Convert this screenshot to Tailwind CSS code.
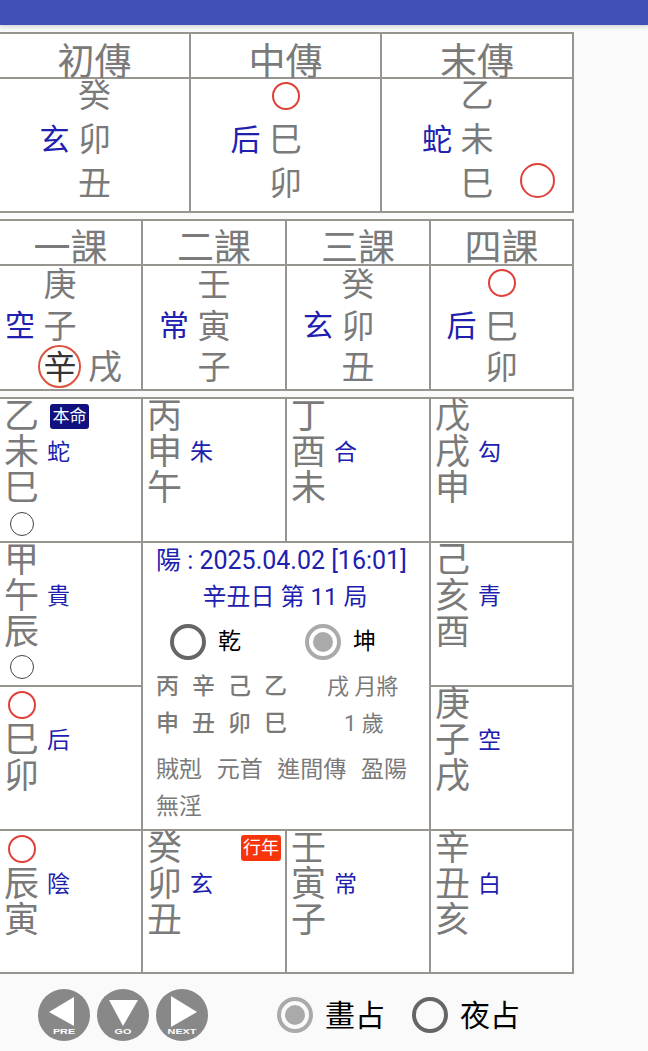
<!DOCTYPE html>
<html lang="en">
<head>
  <meta charset="UTF-8" />
  <meta name="viewport" content="width=device-width, initial-scale=1.0"/>
  <title>六壬</title>
  <script src="https://cdn.jsdelivr.net/npm/@tailwindcss/browser@4"></script>
</head>
<body class="bg-[#fafafa] font-['Roboto','Noto_Sans_CJK_TC',sans-serif] text-[#7a7a7a]">
<div class="w-[648px] h-[1051px] overflow-hidden flex flex-col">
  <!-- App bar -->
  <div class="h-[25px] bg-[#3f51b5] shadow-[0_2px_4px_rgba(0,0,0,0.15)] shrink-0"></div>

  <!-- Three transmissions -->
  <div class="mt-[7px] w-[574px] grid grid-cols-[189px_189px_190px] grid-rows-[43px_132px] gap-[2px] p-[2px] pl-0 bg-[#989490]">
    <div class="bg-white text-center text-[37px] leading-[43px] pt-[7px] h-[43px] relative z-10">初傳</div>
    <div class="bg-white text-center text-[37px] leading-[43px] pt-[7px] h-[43px] relative z-10">中傳</div>
    <div class="bg-white text-center text-[37px] leading-[43px] pt-[7px] h-[43px] relative z-10">末傳</div>

    <div class="bg-white">
      <div class="-mt-[5px] grid grid-cols-[1fr_32px_1fr] grid-rows-[44px_44px_44px] text-[33px] leading-[44px] text-center">
        <span></span><span class="whitespace-nowrap flex justify-center">癸</span><span></span>
        <span class="justify-self-end mr-[9px] text-[30px] text-[#2020b0]">玄</span><span class="flex justify-center">卯</span><span></span>
        <span></span><span class="flex justify-center">丑</span><span></span>
      </div>
    </div>
    <div class="bg-white">
      <div class="-mt-[5px] grid grid-cols-[1fr_32px_1fr] grid-rows-[44px_44px_44px] text-[33px] leading-[44px] text-center">
        <span></span><span class="flex items-center justify-center -mt-[1px]"><i class="block size-[28px] shrink-0 rounded-full border-2 border-[#e0403a]"></i></span><span></span>
        <span class="justify-self-end mr-[9px] text-[30px] text-[#2020b0]">后</span><span class="flex justify-center">巳</span><span></span>
        <span></span><span class="flex justify-center">卯</span><span></span>
      </div>
    </div>
    <div class="bg-white">
      <div class="-mt-[5px] grid grid-cols-[1fr_32px_1fr] grid-rows-[44px_44px_44px] text-[33px] leading-[44px] text-center">
        <span></span><span class="flex justify-center">乙</span><span></span>
        <span class="justify-self-end mr-[9px] text-[30px] text-[#2020b0]">蛇</span><span class="flex justify-center">未</span><span></span>
        <span></span><span class="flex justify-center">巳</span><span class="flex items-center justify-end pr-[17px]"><i class="block size-[35px] rounded-full border-2 border-[#e0403a] -mt-[7px]"></i></span>
      </div>
    </div>
  </div>

  <!-- Four lessons -->
  <div class="mt-[6px] w-[574px] grid grid-cols-[141px_142px_142px_141px] grid-rows-[43px_123px] gap-[2px] p-[2px] pl-0 bg-[#989490]">
    <div class="bg-white text-center text-[37px] leading-[43px] pt-[6px] h-[43px] relative z-10">一課</div>
    <div class="bg-white text-center text-[37px] leading-[43px] pt-[6px] h-[43px] relative z-10">二課</div>
    <div class="bg-white text-center text-[37px] leading-[43px] pt-[6px] h-[43px] relative z-10">三課</div>
    <div class="bg-white text-center text-[37px] leading-[43px] pt-[6px] h-[43px] relative z-10">四課</div>

    <div class="bg-white">
      <div class="-mt-[2px] grid grid-cols-[44px_32px_1fr] grid-rows-[41px_41px_41px] text-[33px] leading-[41px] text-center">
        <span></span><span class="flex justify-center">庚</span><span></span>
        <span class="justify-self-end mr-[9px] text-[30px] text-[#2020b0]">空</span><span class="flex justify-center pt-[1px]">子</span><span></span>
        <span></span>
        <span class="relative flex justify-center pt-[1px] text-[#333]">辛<i class="absolute left-[-6px] top-[-1px] size-[43px] rounded-full border-2 border-[#d9553f]"></i></span>
        <span class="text-left pl-[12px] text-[34px] pt-[1px]">戌</span>
      </div>
    </div>
    <div class="bg-white">
      <div class="-mt-[2px] grid grid-cols-[1fr_32px_1fr] grid-rows-[41px_41px_41px] text-[33px] leading-[41px] text-center">
        <span></span><span class="flex justify-center">壬</span><span></span>
        <span class="justify-self-end mr-[9px] text-[30px] text-[#2020b0]">常</span><span class="flex justify-center pt-[1px]">寅</span><span></span>
        <span></span><span class="flex justify-center pt-[1px]">子</span><span></span>
      </div>
    </div>
    <div class="bg-white">
      <div class="-mt-[2px] grid grid-cols-[1fr_32px_1fr] grid-rows-[41px_41px_41px] text-[33px] leading-[41px] text-center">
        <span></span><span class="flex justify-center">癸</span><span></span>
        <span class="justify-self-end mr-[9px] text-[30px] text-[#2020b0]">玄</span><span class="flex justify-center pt-[1px]">卯</span><span></span>
        <span></span><span class="flex justify-center pt-[1px]">丑</span><span></span>
      </div>
    </div>
    <div class="bg-white">
      <div class="-mt-[2px] grid grid-cols-[1fr_32px_1fr] grid-rows-[41px_41px_41px] text-[33px] leading-[41px] text-center">
        <span></span><span class="flex items-center justify-center -mt-[4px]"><i class="block size-[28px] shrink-0 rounded-full border-2 border-[#e0403a]"></i></span><span></span>
        <span class="justify-self-end mr-[9px] text-[30px] text-[#2020b0]">后</span><span class="flex justify-center pt-[1px]">巳</span><span></span>
        <span></span><span class="flex justify-center pt-[1px]">卯</span><span></span>
      </div>
    </div>
  </div>

  <!-- Palace board -->
  <div class="mt-[6px] w-[574px] grid grid-cols-[141px_142px_142px_141px] grid-rows-[142px_142px_142px_141px] gap-[2px] p-[2px] pl-0 bg-[#989490]">
    <!-- row 1 -->
    <div class="bg-white relative pl-[4px] text-[35px] leading-[36px]">
      <div>乙</div>
      <div class="flex">未<span class="ml-[8px] text-[23px] text-[#2020b0]">蛇</span></div>
      <div>巳</div>
      <div class="h-[36px] w-[35px] flex items-center justify-center -mt-[1px]"><i class="block size-[24px] rounded-full border border-[#444]"></i></div>
      <span class="absolute left-[50px] top-[5px] w-[39px] h-[25px] rounded-[3px] bg-[#10107f] text-white text-[17px] leading-[25px] text-center">本命</span>
    </div>
    <div class="bg-white pl-[4px] text-[35px] leading-[36px]">
      <div>丙</div>
      <div class="flex">申<span class="ml-[8px] text-[23px] text-[#2020b0]">朱</span></div>
      <div>午</div>
    </div>
    <div class="bg-white pl-[4px] text-[35px] leading-[36px]">
      <div>丁</div>
      <div class="flex">酉<span class="ml-[8px] text-[23px] text-[#2020b0]">合</span></div>
      <div>未</div>
    </div>
    <div class="bg-white pl-[4px] text-[35px] leading-[36px]">
      <div>戊</div>
      <div class="flex">戌<span class="ml-[8px] text-[23px] text-[#2020b0]">勾</span></div>
      <div>申</div>
    </div>

    <!-- row 2 -->
    <div class="bg-white pl-[4px] text-[35px] leading-[36px]">
      <div>甲</div>
      <div class="flex">午<span class="ml-[8px] text-[23px] text-[#2020b0]">貴</span></div>
      <div>辰</div>
      <div class="h-[36px] w-[35px] flex items-center justify-center -mt-[2px]"><i class="block size-[24px] rounded-full border border-[#444]"></i></div>
    </div>

    <!-- centre panel -->
    <div class="col-span-2 row-span-2 bg-white px-[13px] pt-[1px]">
      <div class="text-[25px] leading-[34px] text-[#2020b0] whitespace-nowrap">陽 : 2025.04.02 [16:01]</div>
      <div class="mt-[2px] pr-[2px] text-center text-[24px] leading-[34px] text-[#2020b0] whitespace-nowrap">辛丑日 第 11 局</div>
      <div class="mt-[8px] flex items-center h-[40px] pl-[14px] text-[23px] text-black">
        <i class="block size-[36px] rounded-full border-[4px] border-[#666]"></i>
        <span class="ml-[12px]">乾</span>
        <i class="ml-[64px] size-[36px] rounded-full border-[4px] border-[#aaa] flex items-center justify-center"><b class="block size-[20px] rounded-full bg-[#aaa]"></b></i>
        <span class="ml-[12px]">坤</span>
      </div>
      <div class="mt-[6px] flex text-[23px] leading-[37px]">
        <div class="w-[131px] font-medium">
          <div class="flex justify-between"><span>丙</span><span>辛</span><span>己</span><span>乙</span></div>
          <div class="flex justify-between"><span>申</span><span>丑</span><span>卯</span><span>巳</span></div>
        </div>
        <div class="ml-[40px] whitespace-nowrap text-[22px]">
          <div>戌 月將</div>
          <div class="pl-[17px]">1 歲</div>
        </div>
      </div>
      <div class="mt-[9px] text-[23px] leading-[37px]">
        <div class="flex justify-between w-[251px] whitespace-nowrap"><span>賊剋</span><span>元首</span><span>進間傳</span><span>盈陽</span></div>
        <div>無淫</div>
      </div>
    </div>

    <div class="bg-white pl-[4px] text-[35px] leading-[36px]">
      <div>己</div>
      <div class="flex">亥<span class="ml-[8px] text-[23px] text-[#2020b0]">青</span></div>
      <div>酉</div>
    </div>

    <!-- row 3 -->
    <div class="bg-white pl-[4px] text-[35px] leading-[36px]">
      <div class="h-[36px] w-[35px] flex items-center justify-center"><i class="block size-[28px] rounded-full border-2 border-[#e0403a]"></i></div>
      <div class="flex">巳<span class="ml-[8px] text-[23px] text-[#2020b0]">后</span></div>
      <div>卯</div>
    </div>
    <div class="bg-white pl-[4px] text-[35px] leading-[36px]">
      <div>庚</div>
      <div class="flex">子<span class="ml-[8px] text-[23px] text-[#2020b0]">空</span></div>
      <div>戌</div>
    </div>

    <!-- row 4 -->
    <div class="bg-white pl-[4px] text-[35px] leading-[36px]">
      <div class="h-[36px] w-[35px] flex items-center justify-center"><i class="block size-[28px] rounded-full border-2 border-[#e0403a]"></i></div>
      <div class="flex">辰<span class="ml-[8px] text-[23px] text-[#2020b0]">陰</span></div>
      <div>寅</div>
    </div>
    <div class="bg-white relative pl-[4px] text-[35px] leading-[36px]">
      <div>癸</div>
      <div class="flex">卯<span class="ml-[8px] text-[23px] text-[#2020b0]">玄</span></div>
      <div>丑</div>
      <span class="absolute left-[98px] top-[4px] w-[40px] h-[26px] rounded-[3px] bg-[#f8350a] text-white text-[18px] leading-[26px] text-center">行年</span>
    </div>
    <div class="bg-white pl-[4px] text-[35px] leading-[36px]">
      <div>壬</div>
      <div class="flex">寅<span class="ml-[8px] text-[23px] text-[#2020b0]">常</span></div>
      <div>子</div>
    </div>
    <div class="bg-white pl-[4px] text-[35px] leading-[36px]">
      <div>辛</div>
      <div class="flex">丑<span class="ml-[8px] text-[23px] text-[#2020b0]">白</span></div>
      <div>亥</div>
    </div>
  </div>

  <!-- Bottom controls -->
  <div class="mt-[15px] h-[52px] flex items-center pl-[38px]">
    <div class="relative size-[52px] rounded-full bg-[#888]">
      <svg class="absolute inset-0" width="52" height="52" viewBox="0 0 52 52"><polygon points="11,23 36,8 36,37" fill="#fff"/></svg>
      <span class="absolute inset-x-0 bottom-[5px] text-center font-['Liberation_Sans',sans-serif] text-[8px] leading-[9px] font-bold text-white scale-x-[1.35]">PRE</span>
    </div>
    <div class="relative size-[52px] rounded-full bg-[#888] ml-[7px]">
      <svg class="absolute inset-0" width="52" height="52" viewBox="0 0 52 52"><polygon points="12,11 41,11 26,37" fill="#fff"/></svg>
      <span class="absolute inset-x-0 bottom-[5px] text-center font-['Liberation_Sans',sans-serif] text-[8px] leading-[9px] font-bold text-white scale-x-[1.35]">GO</span>
    </div>
    <div class="relative size-[52px] rounded-full bg-[#888] ml-[7px]">
      <svg class="absolute inset-0" width="52" height="52" viewBox="0 0 52 52"><polygon points="15,7 41,23 15,38" fill="#fff"/></svg>
      <span class="absolute inset-x-0 bottom-[5px] text-center font-['Liberation_Sans',sans-serif] text-[8px] leading-[9px] font-bold text-white scale-x-[1.35]">NEXT</span>
    </div>
    <i class="ml-[69px] size-[36px] rounded-full border-[4px] border-[#aaa] flex items-center justify-center"><b class="block size-[20px] rounded-full bg-[#aaa]"></b></i>
    <span class="ml-[12px] text-[30px] text-black">畫占</span>
    <i class="ml-[27px] block size-[36px] rounded-full border-[4px] border-[#666]"></i>
    <span class="ml-[12px] text-[30px] text-black">夜占</span>
  </div>
</div>
</body>
</html>
